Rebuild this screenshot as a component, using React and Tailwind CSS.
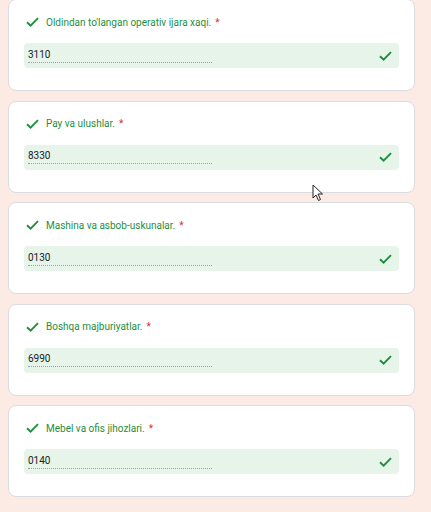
import React from 'react';

const fields = [
  { label: "Oldindan to'langan operativ ijara xaqi.", value: '3110' },
  { label: 'Pay va ulushlar.', value: '8330' },
  { label: 'Mashina va asbob-uskunalar.', value: '0130' },
  { label: 'Boshqa majburiyatlar.', value: '6990' },
  { label: 'Mebel va ofis jihozlari.', value: '0140' },
];

function Check({ className }) {
  return (
    <svg className={className} width="13" height="10" viewBox="0 0 13 10" fill="none">
      <path d="M1 5.2 L4.6 8.6 L12 1.2" stroke="#1e8e3e" strokeWidth="1.9" />
    </svg>
  );
}

function Field({ label, value }) {
  return (
    <div className="h-[92px] rounded-lg border border-[#dadce0] bg-white px-[15px] pt-[14px]">
      <div className="flex h-4 items-center">
        <Check className="ml-[2px] mr-[7px]" />
        <span className="text-[10px] text-[#1e8e3e]">{label}</span>
        <span className="ml-[4px] text-[10px] text-[#d93025]">*</span>
      </div>
      <div className="mt-[13px] flex h-[25px] items-center rounded-sm bg-[#e6f4ea] pl-1 pr-[7px]">
        <div className="w-[184px] border-b border-dotted border-[#9aa0a6] pb-px text-[10px] leading-[12px] text-[#202124]">{value}</div>
        <Check className="ml-auto" />
      </div>
    </div>
  );
}

export default function App() {
  return (
    <div className="relative h-[512px] overflow-hidden bg-[#fcebe4]" style={{ fontFamily: 'Roboto, "Liberation Sans", sans-serif' }}>
      <div className="ml-2 mt-[-1px] flex w-[407px] flex-col gap-[9.5px]">
        {fields.map((f) => (
          <Field key={f.value} label={f.label} value={f.value} />
        ))}
        <div className="flex justify-between px-5 pt-[1px] text-[13px] text-[#70757a]">
          <span>Keyingi bo'lim</span>
          <span>Shaklni tozalash</span>
        </div>
      </div>
      <svg className="absolute left-[312px] top-[184px]" width="13" height="18" viewBox="0 0 13 18">
        <path d="M1 1 L1 14 L4 11 L6.5 16.5 L8.5 15.5 L6 10 L10.5 10 Z" fill="#fff" stroke="#222" strokeWidth="1" />
      </svg>
    </div>
  );
}
